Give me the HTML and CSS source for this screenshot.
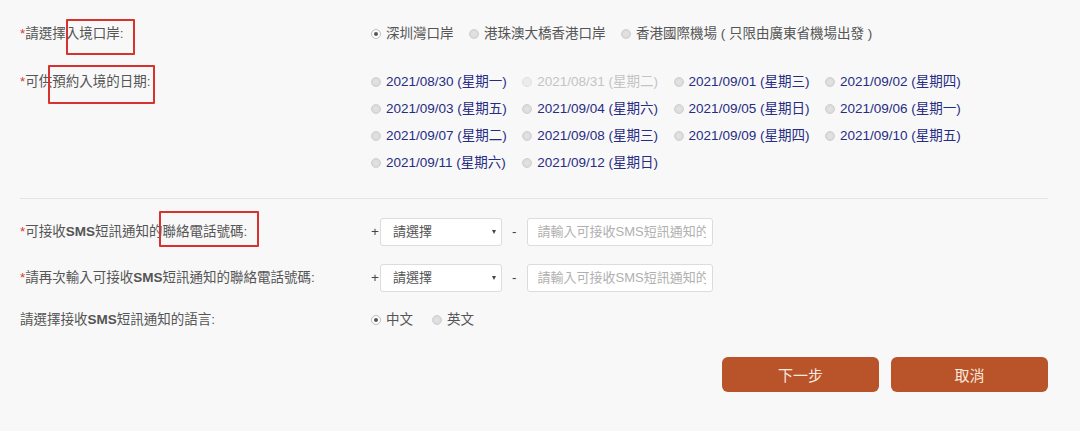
FILE: index.html
```html
<!DOCTYPE html>
<html lang="zh-Hant">
<head>
<meta charset="utf-8">
<title>預約入境</title>
<link rel="stylesheet" href="styles.css">
</head>
<body>
<form class="page">
  <div class="row row-port">
    <div class="label"><span class="req">*</span>請選擇入境口岸:<span class="mark mark-port"></span></div>
    <div class="options">
      <label class="opt opt-port"><span class="radio checked"></span>深圳灣口岸</label>
      <label class="opt opt-port"><span class="radio"></span>港珠澳大橋香港口岸</label>
      <label class="opt opt-port"><span class="radio"></span>香港國際機場 ( 只限由廣東省機場出發 )</label>
    </div>
  </div>

  <div class="row row-dates">
    <div class="label"><span class="req">*</span>可供預約入境的日期:<span class="mark mark-date"></span></div>
    <div class="dates">
      <label class="opt date"><span class="radio"></span>2021/08/30 (星期一)</label>
      <label class="opt date disabled"><span class="radio"></span>2021/08/31 (星期二)</label>
      <label class="opt date"><span class="radio"></span>2021/09/01 (星期三)</label>
      <label class="opt date"><span class="radio"></span>2021/09/02 (星期四)</label>
      <label class="opt date"><span class="radio"></span>2021/09/03 (星期五)</label>
      <label class="opt date"><span class="radio"></span>2021/09/04 (星期六)</label>
      <label class="opt date"><span class="radio"></span>2021/09/05 (星期日)</label>
      <label class="opt date"><span class="radio"></span>2021/09/06 (星期一)</label>
      <label class="opt date"><span class="radio"></span>2021/09/07 (星期二)</label>
      <label class="opt date"><span class="radio"></span>2021/09/08 (星期三)</label>
      <label class="opt date"><span class="radio"></span>2021/09/09 (星期四)</label>
      <label class="opt date"><span class="radio"></span>2021/09/10 (星期五)</label>
      <label class="opt date"><span class="radio"></span>2021/09/11 (星期六)</label>
      <label class="opt date"><span class="radio"></span>2021/09/12 (星期日)</label>
    </div>
  </div>

  <div class="sep"></div>

  <div class="row row-phone row-phone1">
    <div class="label"><span class="req">*</span>可接收<b class="lat">SMS</b>短訊通知的聯絡電話號碼:<span class="mark mark-phone"></span></div>
    <div class="phone">
      <span class="plus">+</span>
      <div class="select"><span>請選擇</span><span class="caret"></span></div>
      <span class="dash">-</span>
      <input class="input" type="text" placeholder="請輸入可接收SMS短訊通知的聯絡電話號碼">
    </div>
  </div>

  <div class="row row-phone row-phone2">
    <div class="label"><span class="req">*</span>請再次輸入可接收<b class="lat">SMS</b>短訊通知的聯絡電話號碼:</div>
    <div class="phone">
      <span class="plus">+</span>
      <div class="select"><span>請選擇</span><span class="caret"></span></div>
      <span class="dash">-</span>
      <input class="input" type="text" placeholder="請輸入可接收SMS短訊通知的聯絡電話號碼">
    </div>
  </div>

  <div class="row row-lang">
    <div class="label">請選擇接收<b class="lat">SMS</b>短訊通知的語言:</div>
    <div class="options">
      <label class="opt opt-lang"><span class="radio checked"></span>中文</label>
      <label class="opt opt-lang"><span class="radio"></span>英文</label>
    </div>
  </div>

  <div class="actions">
    <button type="button" class="btn">下一步</button>
    <button type="button" class="btn">取消</button>
  </div>
</form>
</body>
</html>
```

FILE: styles.css
```css
html, body {
  margin: 0;
  background: #f8f8f8;
}
body {
  font-family: "Liberation Sans", Arial, "Noto Sans CJK TC", sans-serif;
  font-size: 13.5px;
  color: #555;
}
.page {
  padding: 20px 32px 0 20px;
}
.row {
  display: grid;
  grid-template-columns: 351px 1fr;
  align-items: start;
  line-height: 27px;
}
.label {
  position: relative;
  white-space: nowrap;
  color: #555;
}
.req {
  color: #d33a32;
}
.lat {
  font-weight: bold;
}
.mark {
  position: absolute;
  border: 2px solid #d8322e;
  border-radius: 1px;
  box-sizing: border-box;
}
.mark-port {
  left: 46px;
  top: -1px;
  width: 69px;
  height: 36px;
}
.mark-date {
  left: 28px;
  top: -3px;
  width: 107px;
  height: 39px;
}
.mark-phone {
  left: 139px;
  top: -7px;
  width: 100px;
  height: 36px;
}
.row-port {
  height: 27px;
  margin-bottom: 21px;
}
.options {
  display: flex;
  align-items: center;
}
.opt {
  display: inline-flex;
  align-items: center;
  white-space: nowrap;
}
.opt-port {
  margin-right: 15.5px;
}
.opt-lang {
  margin-right: 19px;
}
.radio {
  width: 10px;
  height: 10px;
  box-sizing: border-box;
  border-radius: 50%;
  border: 1px solid #cfcfcf;
  background: radial-gradient(circle at 50% 50%, #e4e4e4 0, #d6d6d6 100%);
  margin-right: 5px;
  flex: none;
  display: inline-flex;
  align-items: center;
  justify-content: center;
}
.radio.checked {
  background: #fff;
  border-color: #bdbdbd;
}
.radio.checked::after {
  content: "";
  width: 4px;
  height: 4px;
  border-radius: 50%;
  background: #555;
}
.dates {
  display: grid;
  grid-template-columns: repeat(4, 151.3px);
  grid-auto-rows: 27px;
}
.date {
  color: #272c83;
}
.date.disabled {
  color: #c4c4c4;
}
.date.disabled .radio {
  border-color: #e0e0e0;
  background: #ececec;
}
.sep {
  margin-top: 22px;
  border-top: 1px solid #e4e4e4;
}
.row-phone {
  line-height: 28px;
}
.row-phone1 {
  margin-top: 19px;
}
.row-phone2 {
  margin-top: 18px;
}
.phone {
  display: flex;
  align-items: center;
  height: 28px;
  color: #444;
}
.plus {
  width: 9px;
  color: #444;
}
.select {
  width: 122px;
  height: 28px;
  box-sizing: border-box;
  background: #fff;
  border: 1px solid #dcdcdc;
  border-radius: 3px;
  display: flex;
  align-items: center;
  justify-content: space-between;
  padding: 0 5px 0 12px;
  color: #555;
  font-size: 13px;
}
.caret {
  width: 0;
  height: 0;
  border-left: 2.5px solid transparent;
  border-right: 2.5px solid transparent;
  border-top: 4px solid #444;
}
.dash {
  margin: 0 10px;
  color: #444;
}
.input {
  width: 186px;
  height: 28px;
  box-sizing: border-box;
  border: 1px solid #dcdcdc;
  border-radius: 3px;
  background: #fff;
  padding: 0 6px 0 10px;
  font: inherit;
  font-size: 13px;
  color: #555;
  outline: none;
}
.input::placeholder {
  color: #b0b0b0;
}
.row-lang {
  margin-top: 14px;
}
.actions {
  margin-top: 24px;
  display: flex;
  justify-content: flex-end;
  gap: 12px;
}
.btn {
  width: 157px;
  height: 35px;
  border: none;
  border-radius: 6px;
  background: #b8532a;
  color: #fbe9dd;
  font-family: "Liberation Sans", Arial, "Noto Sans CJK TC", sans-serif;
  font-size: 15px;
  cursor: pointer;
}
```
